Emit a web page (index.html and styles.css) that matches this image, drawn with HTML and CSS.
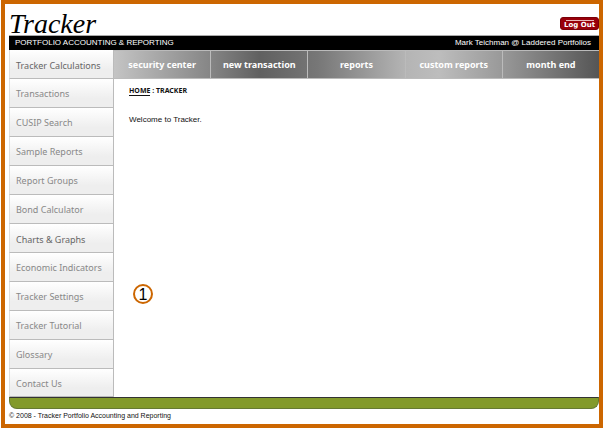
FILE: index.html
```
<!DOCTYPE html>
<html lang="en">
<head>
    <meta charset="UTF-8">
    <meta name="viewport" content="width=device-width, initial-scale=1.0">
    <title>Tracker</title>
    <link rel="stylesheet" href="styles.css">
</head>
<body>
    <div class="page">
        <div class="header">
            <h1>Tracker</h1>
            <button class="logout">Log Out</button>
        </div>
        <div class="titlebar">
            <span>PORTFOLIO ACCOUNTING &amp; REPORTING</span>
            <span>Mark Teichman @ Laddered Portfolios</span>
        </div>

        <div class="container">
            <!-- Left menu -->
            <nav class="sidebar">
                <a class="dark" href="#">Tracker Calculations</a>
                <a href="#">Transactions</a>
                <a href="#">CUSIP Search</a>
                <a href="#">Sample Reports</a>
                <a href="#">Report Groups</a>
                <a href="#">Bond Calculator</a>
                <a class="dark" href="#">Charts &amp; Graphs</a>
                <a href="#">Economic Indicators</a>
                <a href="#">Tracker Settings</a>
                <a href="#">Tracker Tutorial</a>
                <a href="#">Glossary</a>
                <a href="#">Contact Us</a>
            </nav>

            <!-- Main area -->
            <div class="main">
                <nav class="tabs">
                    <a href="#">security center</a>
                    <a href="#">new transaction</a>
                    <a href="#">reports</a>
                    <a href="#">custom reports</a>
                    <a href="#">month end</a>
                </nav>
                <div class="content">
                    <div class="crumbs"><a href="#">HOME</a> : TRACKER</div>
                    <p>Welcome to Tracker.</p>
                    <span class="callout">1</span>
                </div>
            </div>
        </div>

        <div class="footbar"></div>
        <div class="footer">© 2008 - Tracker Portfolio Accounting and Reporting</div>
    </div>
</body>
</html>
```
FILE: styles.css
```
* {
    box-sizing: border-box;
}
body {
    margin: 0;
    padding: 0 1px;
    font-family: "Liberation Sans", Arial, sans-serif;
    background: #fff;
}
a {
    text-decoration: none;
}
.page {
    min-height: 100vh;
    padding-left: 4px;
    border: 4px solid #cc6600;
}
.header {
    display: flex;
    justify-content: space-between;
    align-items: flex-end;
    height: 31px;
}
h1 {
    margin: 0;
    font: italic 28px/22px "Liberation Serif", "Times New Roman", serif;
    color: #000;
}
.logout {
    height: 13px;
    margin-bottom: 5px;
    padding: 3px 3px 0;
    border: 1px solid #7a0008;
    border-radius: 3px;
    background: linear-gradient(#e8b8b8, #e8b8b8) center 2px / 28px 1px no-repeat #99000a;
    color: #fff;
    font: bold 7px/9px "DejaVu Sans", Verdana, sans-serif;
}
.titlebar {
    display: flex;
    justify-content: space-between;
    height: 15px;
    padding: 0 8px 0 6px;
    border-top: 1px solid #aaa;
    background: #000;
    color: #fff;
    font-size: 8px;
    line-height: 14px;
}
.container {
    display: flex;
}
.sidebar {
    width: 105px;
}
.sidebar a {
    display: block;
    height: 29px;
    padding-left: 6px;
    border: 1px solid #bbb;
    border-width: 0 1px 1px;
    border-left-color: #ddd;
    background: linear-gradient(#fff, #eee 70%);
    color: #888;
    font: 9px/30px "Noto Sans", Verdana, sans-serif;
}
.sidebar .dark {
    color: #666;
    line-height: 32px;
}
.sidebar a:last-child {
    height: 28px;
}
.main {
    flex: 1;
}
.tabs {
    display: flex;
    height: 29px;
    border-top: 1px solid #bbb;
    border-bottom: 1px solid #bbb;
    background: linear-gradient(90deg, #c4c4c4, #858585 20%, #606060 30%, #777 42%, #b4b4b4 60%, #bdbdbd 67%, #999 80%, #555);
}
.tabs a {
    flex: 1;
    border-right: 1px solid #bbb;
    color: #fff;
    font: bold 9px/28px "Noto Sans", Verdana, sans-serif;
    text-align: center;
}
.tabs a:last-child {
    border-right: 0;
}
.content {
    position: relative;
    padding: 6px 15px;
    color: #111;
}
.crumbs {
    font: bold 7px/12px "Noto Sans", Verdana, sans-serif;
}
.crumbs a {
    border-bottom: 1px solid #111;
    color: #111;
}
.content p {
    margin: 17px 0;
    font-size: 8px;
    line-height: 12px;
}
.callout {
    position: absolute;
    left: 19px;
    top: 205px;
    width: 20px;
    height: 20px;
    border: 2px solid #cc6600;
    border-radius: 50%;
    color: #000;
    font-size: 16px;
    line-height: 17px;
    text-align: center;
}
.footbar {
    height: 12px;
    border: 1px solid #667a33;
    border-top: 1px solid #333;
    border-radius: 0 0 8px 8px;
    background: #839a2b;
}
.footer {
    color: #111;
    font-size: 7px;
    line-height: 14px;
}
```
